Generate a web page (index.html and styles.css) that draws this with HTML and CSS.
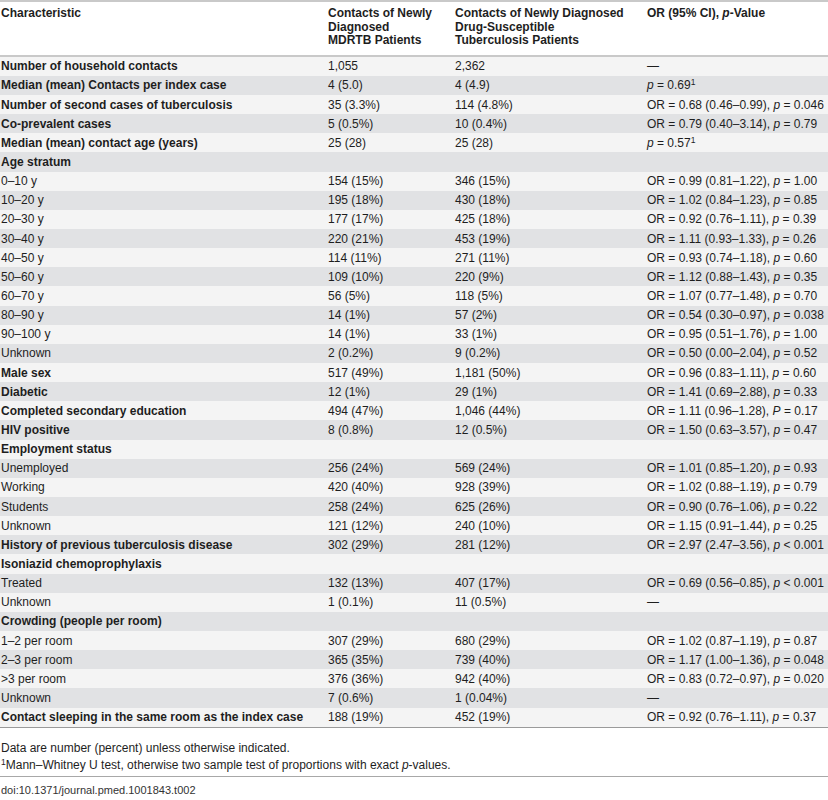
FILE: index.html
```html
<!DOCTYPE html>
<html lang="en">
<head>
    <meta charset="UTF-8">
    <title>Table 2. Characteristics of household contacts</title>
    <link rel="stylesheet" href="styles.css">
</head>
<body>
    <table class="data">
        <colgroup>
            <col class="c-char">
            <col class="c-mdr">
            <col class="c-ds">
            <col class="c-or">
        </colgroup>
        <thead>
            <tr>
                <th>Characteristic</th>
                <th>Contacts of Newly<br>Diagnosed<br>MDRTB Patients</th>
                <th>Contacts of Newly Diagnosed<br>Drug-Susceptible<br>Tuberculosis Patients</th>
                <th>OR (95% CI), <i>p</i>-Value</th>
            </tr>
        </thead>
        <tbody>
            <tr><td class="b">Number of household contacts</td><td>1,055</td><td>2,362</td><td>—</td></tr>
            <tr><td class="b">Median (mean) Contacts per index case</td><td>4 (5.0)</td><td>4 (4.9)</td><td><i>p</i> = 0.69<sup>1</sup></td></tr>
            <tr><td class="b">Number of second cases of tuberculosis</td><td>35 (3.3%)</td><td>114 (4.8%)</td><td>OR = 0.68 (0.46–0.99), <i>p</i> = 0.046</td></tr>
            <tr><td class="b">Co-prevalent cases</td><td>5 (0.5%)</td><td>10 (0.4%)</td><td>OR = 0.79 (0.40–3.14), <i>p</i> = 0.79</td></tr>
            <tr><td class="b">Median (mean) contact age (years)</td><td>25 (28)</td><td>25 (28)</td><td><i>p</i> = 0.57<sup>1</sup></td></tr>
            <tr><td class="b">Age stratum</td><td></td><td></td><td></td></tr>
            <tr><td>0–10 y</td><td>154 (15%)</td><td>346 (15%)</td><td>OR = 0.99 (0.81–1.22), <i>p</i> = 1.00</td></tr>
            <tr><td>10–20 y</td><td>195 (18%)</td><td>430 (18%)</td><td>OR = 1.02 (0.84–1.23), <i>p</i> = 0.85</td></tr>
            <tr><td>20–30 y</td><td>177 (17%)</td><td>425 (18%)</td><td>OR = 0.92 (0.76–1.11), <i>p</i> = 0.39</td></tr>
            <tr><td>30–40 y</td><td>220 (21%)</td><td>453 (19%)</td><td>OR = 1.11 (0.93–1.33), <i>p</i> = 0.26</td></tr>
            <tr><td>40–50 y</td><td>114 (11%)</td><td>271 (11%)</td><td>OR = 0.93 (0.74–1.18), <i>p</i> = 0.60</td></tr>
            <tr><td>50–60 y</td><td>109 (10%)</td><td>220 (9%)</td><td>OR = 1.12 (0.88–1.43), <i>p</i> = 0.35</td></tr>
            <tr><td>60–70 y</td><td>56 (5%)</td><td>118 (5%)</td><td>OR = 1.07 (0.77–1.48), <i>p</i> = 0.70</td></tr>
            <tr><td>80–90 y</td><td>14 (1%)</td><td>57 (2%)</td><td>OR = 0.54 (0.30–0.97), <i>p</i> = 0.038</td></tr>
            <tr><td>90–100 y</td><td>14 (1%)</td><td>33 (1%)</td><td>OR = 0.95 (0.51–1.76), <i>p</i> = 1.00</td></tr>
            <tr><td>Unknown</td><td>2 (0.2%)</td><td>9 (0.2%)</td><td>OR = 0.50 (0.00–2.04), <i>p</i> = 0.52</td></tr>
            <tr><td class="b">Male sex</td><td>517 (49%)</td><td>1,181 (50%)</td><td>OR = 0.96 (0.83–1.11), <i>p</i> = 0.60</td></tr>
            <tr><td class="b">Diabetic</td><td>12 (1%)</td><td>29 (1%)</td><td>OR = 1.41 (0.69–2.88), <i>p</i> = 0.33</td></tr>
            <tr><td class="b">Completed secondary education</td><td>494 (47%)</td><td>1,046 (44%)</td><td>OR = 1.11 (0.96–1.28), <i>P</i> = 0.17</td></tr>
            <tr><td class="b">HIV positive</td><td>8 (0.8%)</td><td>12 (0.5%)</td><td>OR = 1.50 (0.63–3.57), <i>p</i> = 0.47</td></tr>
            <tr><td class="b">Employment status</td><td></td><td></td><td></td></tr>
            <tr><td>Unemployed</td><td>256 (24%)</td><td>569 (24%)</td><td>OR = 1.01 (0.85–1.20), <i>p</i> = 0.93</td></tr>
            <tr><td>Working</td><td>420 (40%)</td><td>928 (39%)</td><td>OR = 1.02 (0.88–1.19), <i>p</i> = 0.79</td></tr>
            <tr><td>Students</td><td>258 (24%)</td><td>625 (26%)</td><td>OR = 0.90 (0.76–1.06), <i>p</i> = 0.22</td></tr>
            <tr><td>Unknown</td><td>121 (12%)</td><td>240 (10%)</td><td>OR = 1.15 (0.91–1.44), <i>p</i> = 0.25</td></tr>
            <tr><td class="b">History of previous tuberculosis disease</td><td>302 (29%)</td><td>281 (12%)</td><td>OR = 2.97 (2.47–3.56), <i>p</i> &lt; 0.001</td></tr>
            <tr><td class="b">Isoniazid chemoprophylaxis</td><td></td><td></td><td></td></tr>
            <tr><td>Treated</td><td>132 (13%)</td><td>407 (17%)</td><td>OR = 0.69 (0.56–0.85), <i>p</i> &lt; 0.001</td></tr>
            <tr><td>Unknown</td><td>1 (0.1%)</td><td>11 (0.5%)</td><td>—</td></tr>
            <tr><td class="b">Crowding (people per room)</td><td></td><td></td><td></td></tr>
            <tr><td>1–2 per room</td><td>307 (29%)</td><td>680 (29%)</td><td>OR = 1.02 (0.87–1.19), <i>p</i> = 0.87</td></tr>
            <tr><td>2–3 per room</td><td>365 (35%)</td><td>739 (40%)</td><td>OR = 1.17 (1.00–1.36), <i>p</i> = 0.048</td></tr>
            <tr><td>&gt;3 per room</td><td>376 (36%)</td><td>942 (40%)</td><td>OR = 0.83 (0.72–0.97), <i>p</i> = 0.020</td></tr>
            <tr><td>Unknown</td><td>7 (0.6%)</td><td>1 (0.04%)</td><td>—</td></tr>
            <tr><td class="b">Contact sleeping in the same room as the index case</td><td>188 (19%)</td><td>452 (19%)</td><td>OR = 0.92 (0.76–1.11), <i>p</i> = 0.37</td></tr>
        </tbody>
    </table>

    <div class="notes">
        <p>Data are number (percent) unless otherwise indicated.</p>
        <p><sup>1</sup>Mann–Whitney U test, otherwise two sample test of proportions with exact <i>p</i>-values.</p>
    </div>

    <div class="doi">doi:10.1371/journal.pmed.1001843.t002</div>
</body>
</html>
```

FILE: styles.css
```css
body {
    margin: 0;
    padding: 0;
    background: #fff;
    color: #1e1e1e;
    font-family: "Liberation Sans", Arial, sans-serif;
    font-size: 12px;
}

.data {
    width: 828px;
    border-collapse: collapse;
    table-layout: fixed;
    border-top: 2px solid #c9c9c9;
    border-bottom: 1px solid #9a9a9a;
}

.c-char { width: 327px; }
.c-mdr { width: 127px; }
.c-ds { width: 192px; }
.c-or { width: 182px; }

.data th {
    text-align: left;
    vertical-align: top;
    font-weight: bold;
    line-height: 13.6px;
    padding: 5px 2px 7px 1px;
    border-bottom: 2px solid #c9c9c9;
    white-space: nowrap;
}

.data td {
    height: 19.15px;
    padding: 0 2px 0 1px;
    line-height: 14px;
    vertical-align: middle;
    white-space: nowrap;
}

.data td.b {
    font-weight: bold;
}

.data tbody tr:nth-child(odd) {
    background: #f4f4f4;
}

.data tbody tr:nth-child(even) {
    background: #e1e2e4;
}

sup {
    font-size: 8.5px;
    line-height: 0;
    vertical-align: 4px;
}

.notes {
    padding: 12px 0 2px 1px;
    border-bottom: 1px solid #a8a8a8;
}

.notes p {
    margin: 0;
    line-height: 17px;
}

.doi {
    padding: 7px 0 0 1px;
    font-size: 11px;
    line-height: 13px;
    color: #333;
}
```
